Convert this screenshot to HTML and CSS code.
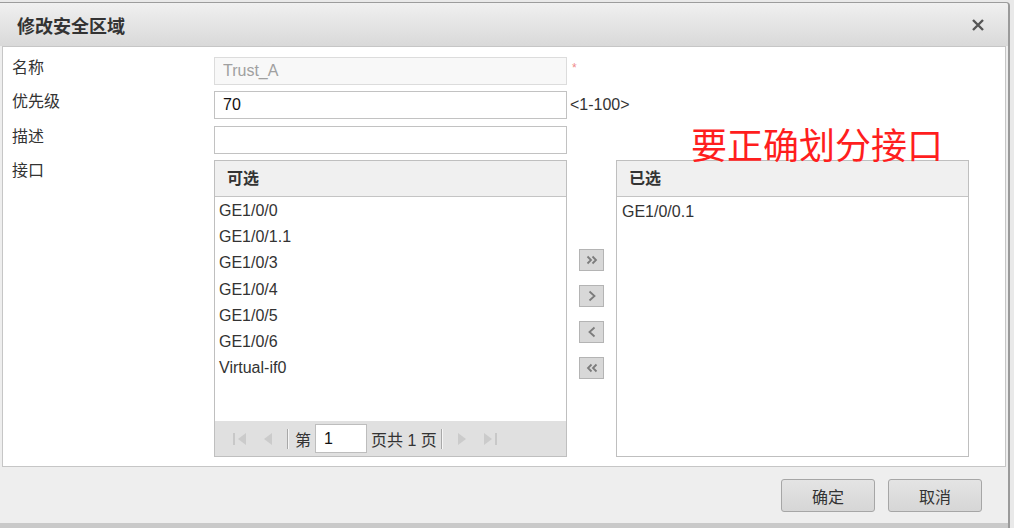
FILE: index.html
```html
<!DOCTYPE html>
<html lang="zh-CN">
<head>
  <meta charset="UTF-8">
  <title>修改安全区域</title>
  <link rel="stylesheet" href="styles.css">
</head>
<body>

<div class="dialog">
  <div class="dialog-header">
    <span class="dialog-title">修改安全区域</span>
    <span class="dialog-close">
      <svg width="14" height="14" viewBox="0 0 14 14"><path d="M2 2 L12 12 M12 2 L2 12" stroke="#555" stroke-width="2.4" fill="none"/></svg>
    </span>
  </div>

  <div class="dialog-body">
    <div class="form-row">
      <span class="form-label">名称</span>
      <input class="form-input" value="Trust_A" disabled>
      <span class="required">*</span>
    </div>
    <div class="form-row">
      <span class="form-label">优先级</span>
      <input class="form-input" value="70">
      <span class="hint">&lt;1-100&gt;</span>
    </div>
    <div class="form-row row-desc">
      <span class="form-label">描述</span>
      <input class="form-input" value="">
    </div>
    <div class="form-row row-lists">
      <span class="form-label">接口</span>
      <div class="transfer">
        <div class="list-box">
          <div class="list-head">可选</div>
          <ul class="list-items">
            <li>GE1/0/0</li>
            <li>GE1/0/1.1</li>
            <li>GE1/0/3</li>
            <li>GE1/0/4</li>
            <li>GE1/0/5</li>
            <li>GE1/0/6</li>
            <li>Virtual-if0</li>
          </ul>
          <div class="pager">
            <svg class="pg-icon" width="16" height="16" viewBox="0 0 16 16"><rect x="1" y="2" width="2" height="12" fill="#c8c8c8"/><path d="M14 2 L6 8 L14 14 Z" fill="#cbcbcb"/></svg>
            <svg class="pg-icon pg-prev" width="12" height="16" viewBox="0 0 12 16"><path d="M11 2 L3 8 L11 14 Z" fill="#cbcbcb"/></svg>
            <span class="pg-sep"></span>
            <span>第</span>
            <input class="pg-input" value="1">
            <span>页共 1 页</span>
            <span class="pg-sep"></span>
            <svg class="pg-icon pg-next" width="12" height="16" viewBox="0 0 12 16"><path d="M1 2 L9 8 L1 14 Z" fill="#cbcbcb"/></svg>
            <svg class="pg-icon" width="16" height="16" viewBox="0 0 16 16"><path d="M2 2 L10 8 L2 14 Z" fill="#cbcbcb"/><rect x="13" y="2" width="2" height="12" fill="#c8c8c8"/></svg>
          </div>
        </div>

        <div class="transfer-ops">
          <span class="op-btn"><svg width="12" height="10" viewBox="0 0 12 10"><path d="M1.5 1.5 L5 5 L1.5 8.5 M6.5 1.5 L10 5 L6.5 8.5" stroke="#7c7c7c" stroke-width="1.8" fill="none"/></svg></span>
          <span class="op-btn"><svg width="12" height="12" viewBox="0 0 12 12"><path d="M3.5 1.5 L8.5 6 L3.5 10.5" stroke="#7c7c7c" stroke-width="1.8" fill="none"/></svg></span>
          <span class="op-btn"><svg width="12" height="12" viewBox="0 0 12 12"><path d="M8.5 1.5 L3.5 6 L8.5 10.5" stroke="#7c7c7c" stroke-width="1.8" fill="none"/></svg></span>
          <span class="op-btn"><svg width="12" height="10" viewBox="0 0 12 10"><path d="M5.5 1.5 L2 5 L5.5 8.5 M10.5 1.5 L7 5 L10.5 8.5" stroke="#7c7c7c" stroke-width="1.8" fill="none"/></svg></span>
        </div>

        <div class="list-box">
          <div class="list-head">已选</div>
          <ul class="list-items list-chosen">
            <li>GE1/0/0.1</li>
          </ul>
        </div>
      </div>
    </div>

    <!-- annotation drawn over the form -->
    <div class="note">要正确划分接口</div>
  </div>

  <div class="dialog-footer">
    <button class="btn">确定</button>
    <button class="btn">取消</button>
  </div>
</div>

</body>
</html>
```

FILE: styles.css
```css
* { box-sizing: border-box; margin: 0; padding: 0; }
body {
  font-family: "Liberation Sans", "Noto Sans CJK SC", sans-serif;
  font-size: 16px;
  color: #333;
  background: #e9e9e9;
  overflow: hidden;
}

/* ——— dialog frame ——— */
.dialog {
  width: 1010px;
  height: 526px;
  margin-top: 2px;
  background: #eeeeee;
  border-top: 1px solid #9c9c9c;
  border-right: 2px solid #9a9a9a;
  border-top-right-radius: 4px;
  display: flex;
  flex-direction: column;
}
.dialog-header {
  height: 43px;
  flex: none;
  background: linear-gradient(#f0f0f0, #d9d9d9);
  border-top-right-radius: 3px;
  display: flex;
  align-items: center;
  justify-content: space-between;
  padding: 0 23px 0 17px;
}
.dialog-title { font-size: 18px; font-weight: bold; color: #333; }
.dialog-close { display: flex; }

/* ——— body ——— */
.dialog-body {
  position: relative;
  flex: none;
  margin: 0 2px;
  background: #fff;
  border: 1px solid #c6c6c6;
  padding: 10px 0 9px 9px;
  display: flex;
  flex-direction: column;
  gap: 6px;
}
.form-row { display: flex; align-items: flex-start; }
.row-desc { margin-top: 1px; }
.form-label { width: 202px; flex: none; line-height: 22px; }
.form-input {
  width: 353px;
  height: 28px;
  border: 1px solid #c2c2c2;
  padding: 0 8px;
  font: inherit;
  color: #111;
  background: #fff;
}
.form-input:disabled { background: #f8f8f8; border-color: #dcdcdc; color: #a0a0a0; }
.required { color: #ef8a8a; font-size: 12px; margin: 4px 0 0 5px; }
.hint { line-height: 28px; margin-left: 3px; }

/* ——— transfer lists ——— */
.transfer { display: flex; height: 297px; }
.list-box {
  width: 353px;
  border: 1px solid #bfbfbf;
  display: flex;
  flex-direction: column;
}
.list-head {
  height: 36px;
  flex: none;
  background: #f0f0f0;
  border-bottom: 1px solid #c4c4c4;
  font-weight: bold;
  line-height: 35px;
  padding-left: 12px;
}
.list-items { list-style: none; flex: 1; padding: 1px 0 0 4px; line-height: 26.2px; }
.list-chosen { padding-left: 5px; padding-top: 2px; }

.pager {
  height: 35px;
  flex: none;
  background: #e0e0e0;
  display: flex;
  align-items: center;
  padding-left: 17px;
  gap: 4px;
}
.pg-icon { flex: none; }
.pg-prev { margin-left: 9px; margin-right: 10px; }
.pg-next { margin-left: 8px; margin-right: 9px; }
.pg-sep {
  width: 1px;
  height: 20px;
  background: #a8a8a8;
  box-shadow: 1px 0 0 #f6f6f6;
  margin-right: 3px;
}
.pg-input {
  width: 52px;
  height: 29px;
  border: 1px solid #bdbdbd;
  font: inherit;
  padding-left: 8px;
  color: #111;
}

.transfer-ops {
  width: 49px;
  flex: none;
  display: flex;
  flex-direction: column;
  align-items: center;
  gap: 14px;
  padding-top: 89px;
}
.op-btn {
  width: 25px;
  height: 22px;
  background: #d8d8d8;
  border: 1px solid #b4b4b4;
  display: flex;
  align-items: center;
  justify-content: center;
}

/* ——— annotation ——— */
.note {
  position: absolute;
  left: 688px;
  top: 80px;
  font-size: 36px;
  line-height: 40px;
  color: #ff1e1e;
}

/* ——— footer ——— */
.dialog-footer {
  flex: 1;
  display: flex;
  justify-content: flex-end;
  align-items: flex-start;
  gap: 13px;
  padding: 12px 26px 0 0;
  border-bottom: 5px solid #c9c9c9;
}
.btn {
  width: 94px;
  height: 33px;
  font: inherit;
  color: #333;
  background: linear-gradient(#e4e4e4, #d6d6d6);
  border: 1px solid #a6a6a6;
  border-radius: 3px;
}
```
